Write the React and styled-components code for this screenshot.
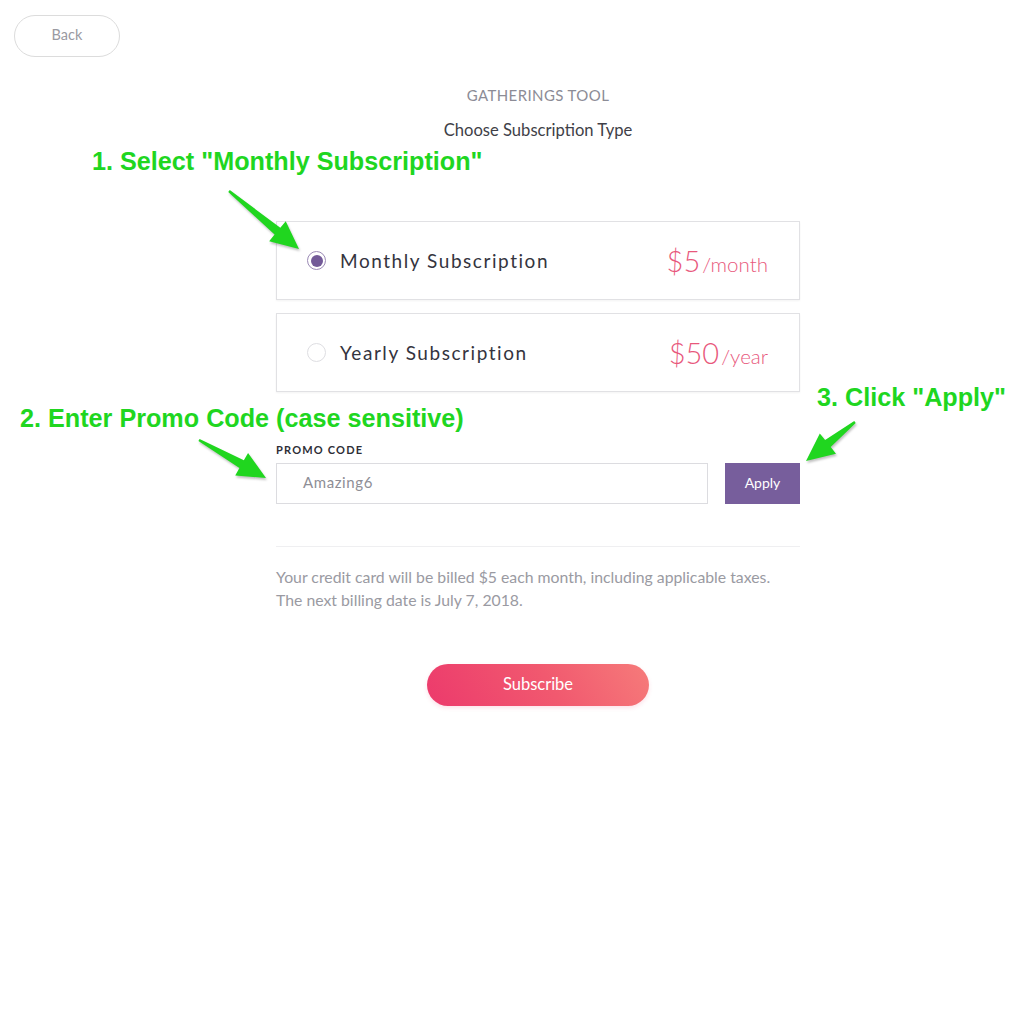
import React from 'react'
import styled, { createGlobalStyle } from 'styled-components'

const GlobalStyle = createGlobalStyle`
  body {
    margin: 0;
    background: #ffffff;
    font-family: "Lato", "Liberation Sans", sans-serif;
  }
`

const Page = styled.div`
  position: relative;
  min-height: 1012px;
  padding-top: 15px;
  box-sizing: border-box;
`

const BackButton = styled.button`
  display: block;
  margin-left: 14px;
  width: 106px;
  height: 42px;
  padding: 0 0 3px;
  border: 1px solid #dcdcdc;
  border-radius: 21px;
  background: #fff;
  color: #9a9aa2;
  font-family: "Lato", sans-serif;
  font-size: 14.5px;
`

const Main = styled.div`
  width: 524px;
  margin-left: 276px;
  display: flex;
  flex-direction: column;
`

const Title = styled.div`
  margin-top: 28px;
  text-align: center;
  font-size: 15px;
  line-height: 20px;
  color: #8c8c96;
  letter-spacing: 0.4px;
`

const Subtitle = styled.div`
  margin-top: 15px;
  text-align: center;
  font-size: 16.6px;
  line-height: 20px;
  color: #3f3f48;
`

const Plans = styled.div`
  margin-top: 81px;
  display: flex;
  flex-direction: column;
  gap: 13px;
`

const Card = styled.label`
  height: 79px;
  box-sizing: border-box;
  border: 1px solid #e1e1e4;
  box-shadow: 0 1px 2px rgba(0, 0, 0, 0.05);
  display: flex;
  align-items: center;
  padding: 0 31px 0 30px;
`

const Radio = styled.span`
  width: 19px;
  height: 19px;
  box-sizing: border-box;
  border-radius: 50%;
  border: 1px solid ${p => (p.checked ? '#9b8ab5' : '#dedee2')};
  display: flex;
  align-items: center;
  justify-content: center;
  &::after {
    content: '';
    width: 12px;
    height: 12px;
    border-radius: 50%;
    background: ${p => (p.checked ? '#735a98' : 'transparent')};
  }
`

const PlanName = styled.span`
  margin-left: 14px;
  flex: 1;
  font-size: 19px;
  letter-spacing: 1.55px;
  color: #34343e;
`

const Price = styled.span`
  color: #e8587c;
  font-size: 29px;
  font-weight: 300;
  small {
    font-size: 20.5px;
    margin-left: 2px;
  }
`

const PromoLabel = styled.div`
  margin-top: 51px;
  font-size: 11px;
  line-height: 14px;
  font-weight: 700;
  letter-spacing: 1.2px;
  color: #2e2e36;
`

const PromoRow = styled.div`
  margin-top: 6px;
  display: flex;
  gap: 17px;
`

const PromoInput = styled.div`
  flex: 1;
  height: 41px;
  box-sizing: border-box;
  border: 1px solid #dcdce0;
  padding: 0 0 3px 26px;
  display: flex;
  align-items: center;
  font-size: 15px;
  letter-spacing: 0.6px;
  color: #8e8e96;
`

const ApplyButton = styled.button`
  width: 75px;
  height: 41px;
  padding: 0 0 2px;
  border: none;
  background: #775e9c;
  color: #fff;
  font-family: "Lato", sans-serif;
  font-size: 14px;
`

const Divider = styled.hr`
  margin: 42px 0 0;
  border: none;
  border-top: 1px solid #efeff1;
`

const Note = styled.p`
  margin: 18px 0 0;
  font-size: 15.8px;
  line-height: 23px;
  color: #9a9aa2;
`

const SubscribeButton = styled.button`
  align-self: center;
  margin-top: 53px;
  width: 222px;
  height: 42px;
  padding: 0 0 2px;
  border: none;
  border-radius: 21px;
  background: linear-gradient(60deg, #ec3a6c 0%, #f1596f 55%, #f67b7a 100%);
  color: #fff;
  font-family: "Lato", sans-serif;
  font-size: 16.5px;
  box-shadow: 0 2px 4px rgba(238, 62, 110, 0.15);
`

const Callout = styled.div`
  position: absolute;
  left: ${p => p.x}px;
  top: ${p => p.y}px;
  font-family: "Liberation Sans", Arial, sans-serif;
  font-weight: 700;
  font-size: 25.2px;
  line-height: 28px;
  color: #20d61f;
  white-space: nowrap;
`

const ArrowLayer = styled.svg`
  position: absolute;
  left: 0;
  top: 0;
  pointer-events: none;
`

const arrowPoints = (x1, y1, x2, y2) => {
  const dx = x2 - x1
  const dy = y2 - y1
  const len = Math.hypot(dx, dy)
  const ux = dx / len
  const uy = dy / len
  const px = -uy
  const py = ux
  const head = 28
  const hw = 13
  const bx = x2 - ux * head
  const by = y2 - uy * head
  const pts = [
    [x1 + px * 1.2, y1 + py * 1.2],
    [bx + px * 4.5, by + py * 4.5],
    [bx + px * hw, by + py * hw],
    [x2, y2],
    [bx - px * hw, by - py * hw],
    [bx - px * 4.5, by - py * 4.5],
    [x1 - px * 1.2, y1 - py * 1.2],
  ]
  return pts.map(p => p.join(',')).join(' ')
}

const arrows = [
  [229, 191, 299, 249],
  [199, 440, 266, 478],
  [855, 422, 806, 461],
]

const plans = [
  { name: 'Monthly Subscription', price: '$5', unit: '/month', checked: true },
  { name: 'Yearly Subscription', price: '$50', unit: '/year', checked: false },
]

const App = () => {
  return (
    <Page>
      <GlobalStyle />
      <BackButton>Back</BackButton>
      <Main>
        <Title>GATHERINGS TOOL</Title>
        <Subtitle>Choose Subscription Type</Subtitle>
        <Plans>
          {plans.map(plan => (
            <Card key={plan.name}>
              <Radio checked={plan.checked} />
              <PlanName>{plan.name}</PlanName>
              <Price>
                {plan.price}
                <small>{plan.unit}</small>
              </Price>
            </Card>
          ))}
        </Plans>
        <PromoLabel>PROMO CODE</PromoLabel>
        <PromoRow>
          <PromoInput>Amazing6</PromoInput>
          <ApplyButton>Apply</ApplyButton>
        </PromoRow>
        <Divider />
        <Note>
          Your credit card will be billed $5 each month, including applicable taxes.
          <br />
          The next billing date is July 7, 2018.
        </Note>
        <SubscribeButton>Subscribe</SubscribeButton>
      </Main>

      <Callout x={92} y={147}>1. Select "Monthly Subscription"</Callout>
      <Callout x={20} y={404}>2. Enter Promo Code (case sensitive)</Callout>
      <Callout x={817} y={383}>3. Click "Apply"</Callout>
      <ArrowLayer width="1024" height="1012">
        {arrows.map((a, i) => (
          <polygon
            key={i}
            points={arrowPoints(...a)}
            fill="#20d61f"
            style={{ filter: 'drop-shadow(1px 2px 1px rgba(0,0,0,0.25))' }}
          />
        ))}
      </ArrowLayer>
    </Page>
  )
}

export default App
